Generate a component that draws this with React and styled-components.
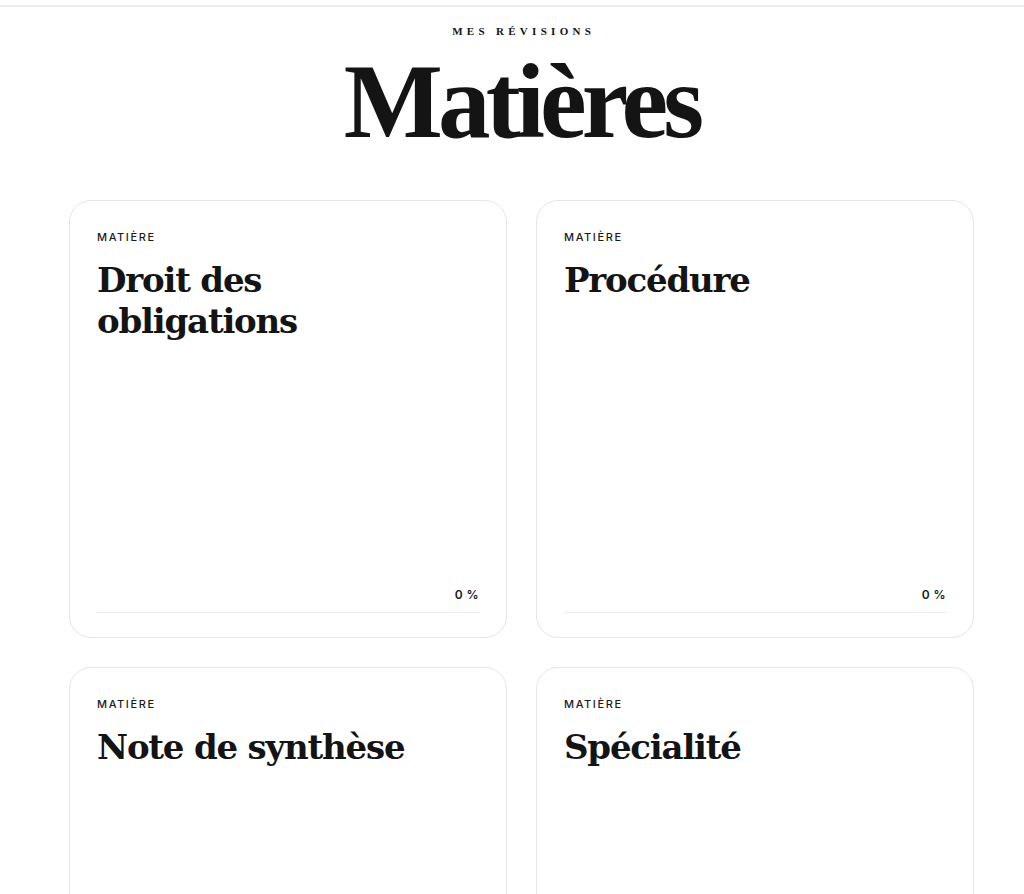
import React from "react";
import styled, { createGlobalStyle } from "styled-components";

const Global = createGlobalStyle`
  html, body { margin: 0; padding: 0; background: #ffffff; }
  body { font-family: "Inter", "Liberation Sans", sans-serif; color: #141414; }
`;

const TopRule = styled.div`
  height: 5px;
  border-bottom: 2px solid #ececec;
`;

const Page = styled.main`
  padding: 0 50px 40px 69px;
`;

const Header = styled.header`
  display: flex;
  flex-direction: column;
  align-items: center;
  padding-top: 16px;
`;

const Eyebrow = styled.div`
  font-family: "Liberation Serif", "DejaVu Serif", serif;
  font-weight: 700;
  font-size: 11px;
  letter-spacing: 4.3px;
  line-height: 16px;
  margin-right: -4.3px;
  color: #141414;
`;

const Title = styled.h1`
  margin: 13px 0 0;
  font-family: "Liberation Serif", "DejaVu Serif", serif;
  font-weight: 700;
  font-size: 105px;
  line-height: 100px;
  letter-spacing: -4.9px;
  color: #141414;
`;

const Grid = styled.section`
  display: grid;
  grid-template-columns: repeat(2, 1fr);
  gap: 29px;
  margin-top: 48px;
`;

const Card = styled.article`
  box-sizing: border-box;
  height: 438px;
  border: 1px solid #e6e6e6;
  border-radius: 22px;
  padding: 30px 27px 24px;
  display: flex;
  flex-direction: column;
`;

const Label = styled.div`
  font-family: "Inter", "Liberation Sans", sans-serif;
  font-size: 11px;
  font-weight: 500;
  letter-spacing: 1.6px;
  line-height: 13px;
  color: #1a1a1a;
`;

const CardTitle = styled.h2`
  margin: 16px 0 0;
  font-family: "DejaVu Serif", "Liberation Serif", serif;
  font-weight: 700;
  font-size: 34px;
  line-height: 41px;
  letter-spacing: -1.2px;
  color: #141414;
  max-width: ${({ $wide }) => ($wide ? "none" : "240px")};
`;

const Footer = styled.div`
  margin-top: auto;
  display: flex;
  flex-direction: column;
  gap: 10px;
`;

const Percent = styled.div`
  align-self: flex-end;
  font-family: "Inter", "Liberation Sans", sans-serif;
  font-size: 12px;
  font-weight: 600;
  letter-spacing: 0.4px;
  line-height: 14px;
  color: #1a1a1a;
`;

const Track = styled.div`
  height: 1px;
  background: #ececec;
`;

const Fill = styled.div`
  height: 100%;
  background: #141414;
`;

const subjects = [
  { name: "Droit des obligations", progress: 0 },
  { name: "Procédure", progress: 0, wide: true },
  { name: "Note de synthèse", progress: 0, wide: true },
  { name: "Spécialité", progress: 0, wide: true },
];

export default function App() {
  return (
    <>
      <Global />
      <TopRule />
      <Page>
        <Header>
          <Eyebrow>MES RÉVISIONS</Eyebrow>
          <Title>Matières</Title>
        </Header>
        <Grid>
          {subjects.map((s) => (
            <Card key={s.name}>
              <Label>MATIÈRE</Label>
              <CardTitle $wide={s.wide}>{s.name}</CardTitle>
              <Footer>
                <Percent>{s.progress} %</Percent>
                <Track>
                  <Fill style={{ width: `${s.progress}%` }} />
                </Track>
              </Footer>
            </Card>
          ))}
        </Grid>
      </Page>
    </>
  );
}
